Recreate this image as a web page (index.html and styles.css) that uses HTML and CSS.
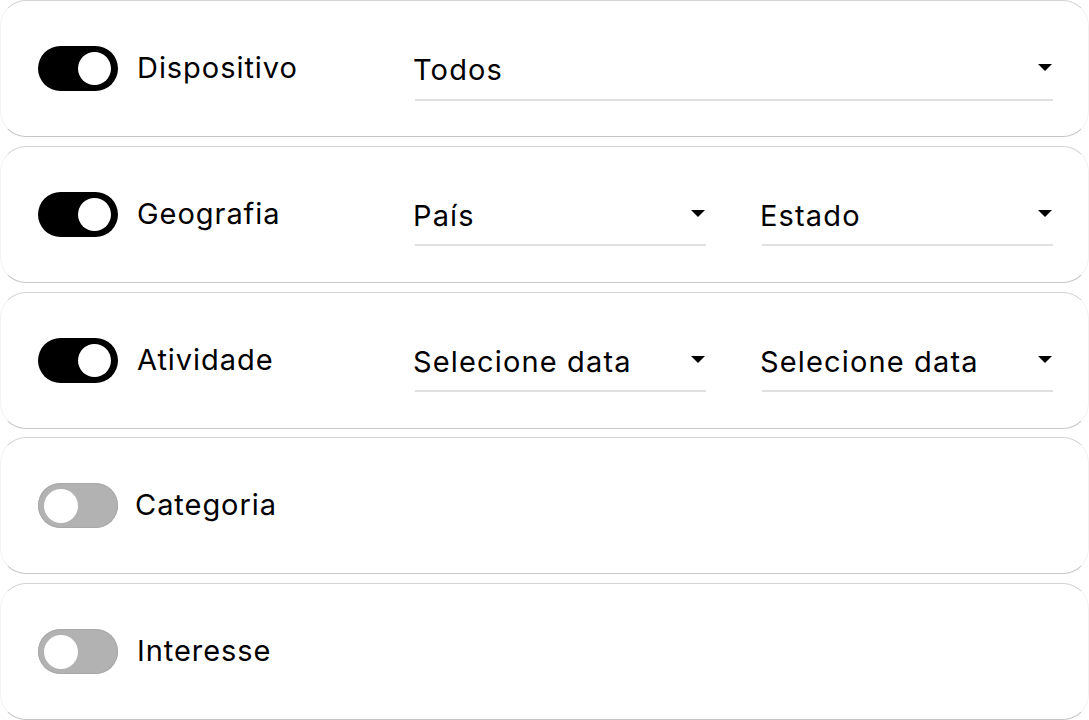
FILE: index.html
```html
<!DOCTYPE html>
<html lang="pt">
<head>
<meta charset="utf-8">
<title>Filtros</title>
<link rel="stylesheet" href="styles.css">
</head>
<body>
<div class="list">
  <div class="card">
    <span class="toggle on"><span class="knob"></span></span>
    <span class="label">Dispositivo</span>
    <div class="fields">
      <div class="select"><span class="value">Todos</span><span class="caret"></span></div>
    </div>
  </div>
  <div class="card">
    <span class="toggle on"><span class="knob"></span></span>
    <span class="label">Geografia</span>
    <div class="fields">
      <div class="select"><span class="value">País</span><span class="caret"></span></div>
      <div class="select"><span class="value">Estado</span><span class="caret"></span></div>
    </div>
  </div>
  <div class="card">
    <span class="toggle on"><span class="knob"></span></span>
    <span class="label">Atividade</span>
    <div class="fields">
      <div class="select"><span class="value">Selecione data</span><span class="caret"></span></div>
      <div class="select"><span class="value">Selecione data</span><span class="caret"></span></div>
    </div>
  </div>
  <div class="card">
    <span class="toggle off"><span class="knob"></span></span>
    <span class="label label-c">Categoria</span>
  </div>
  <div class="card">
    <span class="toggle off"><span class="knob"></span></span>
    <span class="label">Interesse</span>
  </div>
</div>
</body>
</html>
```

FILE: styles.css
```css
* { box-sizing: border-box; }
html, body { margin: 0; padding: 0; background: #ffffff; }
body {
  font-family: "Inter", "Open Sans", sans-serif;
  color: #000;
  width: 1089px;
  height: 720px;
  overflow: hidden;
}
.list {
  display: flex;
  flex-direction: column;
  gap: 8.75px;
}
.card {
  height: 137px;
  display: flex;
  align-items: center;
  padding-left: 37px;
  border: 1px solid #d4d4d4;
  border-left-color: #f2f2f2;
  border-right-color: #f2f2f2;
  border-bottom-color: #c6c6c6;
  border-radius: 26px;
  background: #fff;
}
.toggle {
  width: 80px;
  height: 45px;
  border-radius: 23px;
  display: flex;
  align-items: center;
  padding: 0 7px 0 6px;
  flex-shrink: 0;
}
.toggle.on { background: #000; justify-content: flex-end; }
.toggle.off { background: #b2b2b2; justify-content: flex-start; box-shadow: inset 0 0 0 1px #a8a8a8; }
.knob {
  width: 33px;
  height: 33px;
  border-radius: 50%;
  background: #fff;
}
.toggle.off .knob { width: 34px; height: 34px; }
.label {
  font-size: 29px;
  letter-spacing: 0.95px;
  margin-left: 19px;
  width: 278px;
  flex-shrink: 0;
  line-height: 1;
  margin-top: -2px;
}
.label-c { margin-left: 17px; width: 280px; }
.fields {
  display: flex;
  gap: 56px;
  width: 638px;
  margin-top: 16px;
}
.select {
  flex: 1;
  display: flex;
  align-items: center;
  justify-content: space-between;
  height: 48px;
  border-bottom: 2px solid #e0e0e0;
  padding-bottom: 12px;
}
.value {
  font-size: 29px;
  letter-spacing: 1.15px;
  line-height: 1;
  margin-left: -2px;
}
.caret {
  width: 0;
  height: 0;
  border-left: 7px solid transparent;
  border-right: 7px solid transparent;
  border-top: 7px solid #000;
  margin-right: 1px;
  margin-top: -4px;
}
```
